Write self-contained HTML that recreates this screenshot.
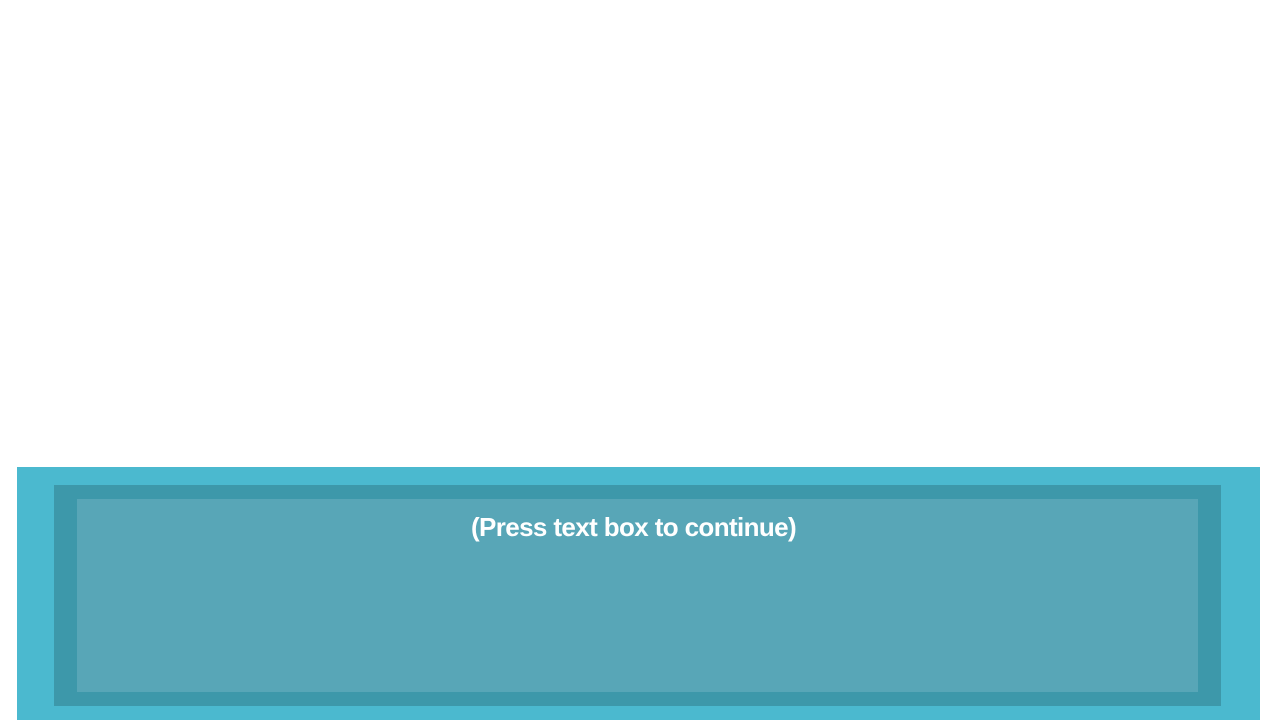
<!DOCTYPE html>
<html><head><meta charset="utf-8"><style>
html,body{margin:0;padding:0;width:1280px;height:720px;background:#fff;overflow:hidden;position:relative}
div{position:absolute;box-sizing:border-box}
#o{left:17px;top:467px;width:1243px;height:253px;background:#4bb9cf}
#m{left:54px;top:485px;width:1167px;height:221px;background:#3d98aa}
#i{left:77px;top:499px;width:1121px;height:193px;background:#58a6b7}
#t{left:73px;top:512px;width:1121px;text-align:center;color:#fff;font:bold 26px "Liberation Sans",sans-serif;letter-spacing:-0.62px}
</style></head><body>
<div id="o"></div><div id="m"></div><div id="i"></div>
<div id="t">(Press text box to continue)</div>
</body></html>
